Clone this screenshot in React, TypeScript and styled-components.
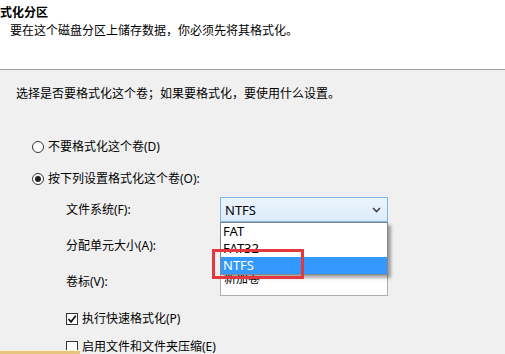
import styled, { createGlobalStyle } from "styled-components";

const GlobalStyle = createGlobalStyle`
  body {
    margin: 0;
    font-family: "Noto Sans", "Noto Sans CJK SC", sans-serif;
    font-size: 12px;
    color: #000;
  }
`;

const Page = styled.div`
  position: relative;
  width: 505px;
  height: 354px;
  overflow: hidden;
  background-color: #f0f0f0;
`;

const Header = styled.div`
  height: 70px;
  background-color: #fff;
  border-bottom: 1px solid #a0a0a0;
  box-sizing: border-box;
  padding-top: 5px;
`;

const Title = styled.div`
  font-weight: bold;
  line-height: 16px;
`;

const Subtitle = styled.div`
  margin-top: 2px;
  padding-left: 10px;
  line-height: 16px;
`;

const Content = styled.div`
  padding: 16px 0 0 16px;
`;

const Text = styled.div`
  line-height: 16px;
`;

const Options = styled.div`
  display: flex;
  flex-direction: column;
  gap: 16px;
  margin: 37px 0 0 16px;
`;

const OptionRow = styled.div`
  display: flex;
  align-items: center;
  gap: 4px;
  line-height: 16px;
`;

const Radio = styled.span<{ $on?: boolean }>`
  width: 12px;
  height: 12px;
  box-sizing: border-box;
  border: 1px solid #333;
  border-radius: 50%;
  background: #fff;
  display: flex;
  align-items: center;
  justify-content: center;

  &::after {
    content: "";
    width: 6px;
    height: 6px;
    border-radius: 50%;
    background: #222;
    display: ${(p) => (p.$on ? "block" : "none")};
  }
`;

const Box = styled.span`
  width: 12px;
  height: 12px;
  box-sizing: border-box;
  border: 1px solid #333;
  background: #fff;
  display: flex;
  align-items: center;
  justify-content: center;
`;

const FormGrid = styled.div`
  display: grid;
  grid-template-columns: 154px 168px;
  grid-auto-rows: 25px;
  row-gap: 11px;
  margin: 10px 0 0 50px;

  & > :last-child {
    height: 27px;
  }
`;

const Label = styled.div`
  display: flex;
  align-items: center;
  line-height: 16px;
`;

const Select = styled.div<{ $open?: boolean }>`
  position: relative;
  display: flex;
  align-items: center;
  justify-content: space-between;
  box-sizing: border-box;
  height: 25px;
  padding: 0 6px 0 4px;
  border: 1px solid ${(p) => (p.$open ? "#7eb4ea" : "#acacac")};
  background: ${(p) =>
    p.$open
      ? "linear-gradient(#ecf4fc, #dcecfc)"
      : "linear-gradient(#f0f0f0, #e5e5e5)"};
  font-size: 13px;
`;

const Input = styled.div`
  box-sizing: border-box;
  height: 27px;
  padding: 1px 0 0 3px;
  border: 1px solid #abadb3;
  background: #fff;
  line-height: 16px;
`;

const List = styled.div`
  position: absolute;
  z-index: 2;
  left: -1px;
  top: 24px;
  width: 168px;
  box-sizing: border-box;
  border: 1px solid #828790;
  background: #fff;
  box-shadow: 3px 3px 3px rgba(0, 0, 0, 0.35);
`;

const Item = styled.div<{ $active?: boolean }>`
  height: 17px;
  line-height: 17px;
  padding-left: 2px;
  font-size: 13px;
  color: ${(p) => (p.$active ? "#fff" : "#000")};
  background: ${(p) => (p.$active ? "#3399ff" : "transparent")};
`;

const Marker = styled.div`
  position: absolute;
  z-index: 3;
  left: -9px;
  top: 26px;
  width: 92px;
  height: 30px;
  box-sizing: border-box;
  border: 3px solid #e4393c;
`;

const Checks = styled.div`
  display: flex;
  flex-direction: column;
  gap: 12px;
  margin: 17px 0 0 50px;
`;

const Strip = styled.div`
  position: absolute;
  left: 0;
  bottom: 0;
  width: 80px;
  height: 3px;
  background: #e6c47a;
  border-top: 1px solid #fbf3dc;
`;

const Chevron = () => (
  <svg width="9" height="6" viewBox="0 0 9 6">
    <path d="M1 1 L4.5 4.5 L8 1" fill="none" stroke="#444" strokeWidth="1.6" />
  </svg>
);

const Tick = () => (
  <svg width="10" height="10" viewBox="0 0 10 10">
    <path d="M1.5 5 L4 7.8 L8.8 1.8" fill="none" stroke="#111" strokeWidth="1.8" />
  </svg>
);

export default function App() {
  return (
    <Page>
      <GlobalStyle />
      <Header>
        <Title>式化分区</Title>
        <Subtitle>要在这个磁盘分区上储存数据，你必须先将其格式化。</Subtitle>
      </Header>
      <Content>
        <Text>选择是否要格式化这个卷；如果要格式化，要使用什么设置。</Text>
        <Options>
          <OptionRow>
            <Radio />
            不要格式化这个卷(D)
          </OptionRow>
          <OptionRow>
            <Radio $on />
            按下列设置格式化这个卷(O):
          </OptionRow>
        </Options>
        <FormGrid>
          <Label>文件系统(F):</Label>
          <Select $open>
            NTFS
            <Chevron />
            <List>
              <Item>FAT</Item>
              <Item>FAT32</Item>
              <Item $active>NTFS</Item>
              <Marker />
            </List>
          </Select>
          <Label>分配单元大小(A):</Label>
          <Select>
            <span />
            <Chevron />
          </Select>
          <Label>卷标(V):</Label>
          <Input>新加卷</Input>
        </FormGrid>
        <Checks>
          <OptionRow>
            <Box>
              <Tick />
            </Box>
            执行快速格式化(P)
          </OptionRow>
          <OptionRow>
            <Box />
            启用文件和文件夹压缩(E)
          </OptionRow>
        </Checks>
      </Content>
      <Strip />
    </Page>
  );
}
